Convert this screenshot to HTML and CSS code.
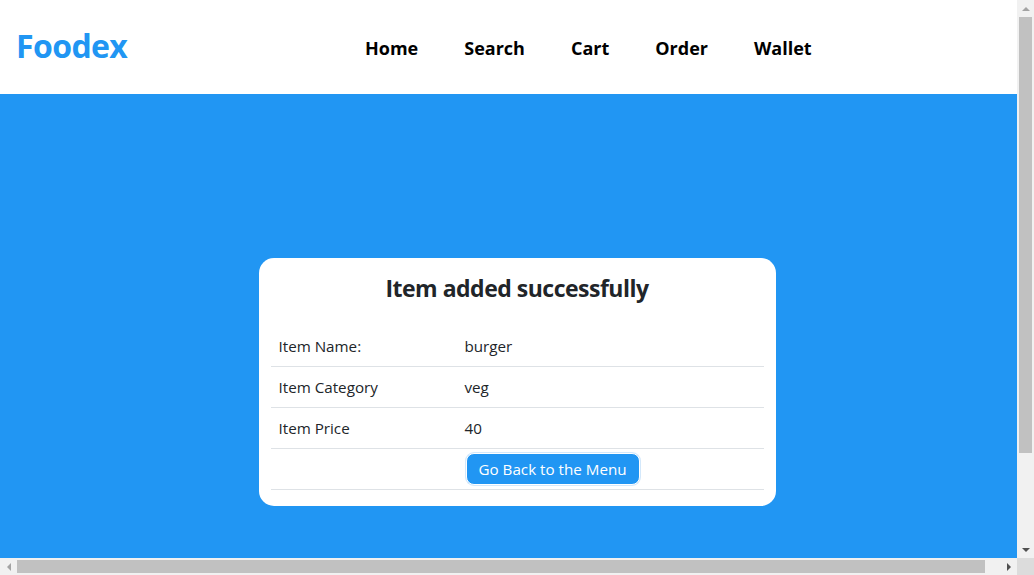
FILE: index.html
```html
<!DOCTYPE html>
<html lang="en">
<head>
<meta charset="utf-8">
<title>Foodex</title>
<link rel="stylesheet" href="styles.css">
</head>
<body>
<header class="topbar">
  <div class="logo">Foodex</div>
  <nav class="nav">
    <a class="nav-link" href="#">Home</a>
    <a class="nav-link" href="#">Search</a>
    <a class="nav-link" href="#">Cart</a>
    <a class="nav-link" href="#">Order</a>
    <a class="nav-link" href="#">Wallet</a>
  </nav>
</header>
<main class="hero">
  <section class="card">
    <h3 class="card-title">Item added successfully</h3>
    <table class="info">
      <tr><td class="label">Item Name:</td><td>burger</td></tr>
      <tr><td class="label">Item Category</td><td>veg</td></tr>
      <tr><td class="label">Item Price</td><td>40</td></tr>
      <tr><td class="label"></td><td><button class="btn">Go Back to the Menu</button></td></tr>
    </table>
  </section>
</main>
<div class="vscroll" aria-hidden="true">
  <div class="sb-btn"><span class="arrow arrow-up"></span></div>
  <div class="vtrack"><div class="vthumb"></div></div>
  <div class="sb-btn"><span class="arrow arrow-down"></span></div>
</div>
<div class="hscroll" aria-hidden="true">
  <div class="sb-btn"><span class="arrow arrow-left"></span></div>
  <div class="htrack"><div class="hthumb"></div></div>
  <div class="sb-btn"><span class="arrow arrow-right"></span></div>
</div>
<div class="sb-corner" aria-hidden="true"></div>
</body>
</html>
```
FILE: styles.css
```css
html, body {
  margin: 0;
  padding: 0;
}
body {
  font-family: "Open Sans", "Noto Sans", sans-serif;
  color: #212529;
  background: #fff;
}
.topbar {
  display: flex;
  align-items: center;
  height: 94px;
  background: #fff;
}
.logo {
  padding-left: 16px;
  font-size: 32px;
  letter-spacing: -0.6px;
  font-weight: 700;
  color: #2196f3;
  width: 365px;
  box-sizing: border-box;
  margin-bottom: 4px;
}
.nav {
  display: flex;
  gap: 46px;
  padding-top: 2px;
}
.nav-link {
  font-size: 18px;
  font-weight: 700;
  color: #000;
  text-decoration: none;
}
.hero {
  width: 100vw;
  height: 100vh;
  background: #2196f3;
  display: flex;
  align-items: center;
  justify-content: center;
}
.card {
  width: 517px;
  box-sizing: border-box;
  background: #fff;
  border-radius: 15px;
  padding: 12px 12px 16px;
}
.card-title {
  margin: 1px 0 21px;
  text-align: center;
  font-size: 23px;
  letter-spacing: -0.5px;
  font-weight: 700;
  line-height: 34px;
  color: #212529;
}
.info {
  width: 100%;
  border-collapse: collapse;
  font-size: 15.2px;
}
.info td {
  padding: 8px;
  line-height: 24px;
  border-bottom: 1px solid #dee2e6;
  vertical-align: middle;
}
.info td.label {
  width: 170px;
}
.btn {
  font-family: inherit;
  font-size: 15.2px;
  line-height: 20px;
  color: #fff;
  background: #2196f3;
  border: 1px solid #fff;
  box-shadow: 0 0 0 1px #d3e8fb;
  border-radius: 8px;
  padding: 5px 12px;
  margin: -4px 0 -4px 1px;
}

/* scrollbars as drawn in the reference */
.vscroll {
  position: fixed;
  top: 0;
  right: 0;
  bottom: 17px;
  width: 17px;
  background: #f1f1f1;
  display: flex;
  flex-direction: column;
}
.hscroll {
  position: fixed;
  left: 0;
  right: 17px;
  bottom: 0;
  height: 17px;
  background: #f1f1f1;
  display: flex;
}
.sb-corner {
  position: fixed;
  right: 0;
  bottom: 0;
  width: 17px;
  height: 17px;
  background: #dcdcdc;
}
.sb-btn {
  width: 17px;
  height: 17px;
  flex: none;
  display: flex;
  align-items: center;
  justify-content: center;
}
.vtrack {
  flex: 1;
}
.vthumb {
  height: 436px;
  margin: 0 2px;
  background: #c1c1c1;
}
.htrack {
  flex: 1;
  display: flex;
  align-items: center;
}
.hthumb {
  width: 968px;
  height: 13px;
  background: #c1c1c1;
}
.arrow {
  width: 0;
  height: 0;
  display: block;
}
.arrow-up {
  border-left: 4px solid transparent;
  border-right: 4px solid transparent;
  border-bottom: 4px solid #a3a3a3;
}
.arrow-down {
  border-left: 4px solid transparent;
  border-right: 4px solid transparent;
  border-top: 4px solid #505050;
}
.arrow-left {
  border-top: 4px solid transparent;
  border-bottom: 4px solid transparent;
  border-right: 4px solid #a3a3a3;
}
.arrow-right {
  border-top: 4px solid transparent;
  border-bottom: 4px solid transparent;
  border-left: 4px solid #505050;
}
```
